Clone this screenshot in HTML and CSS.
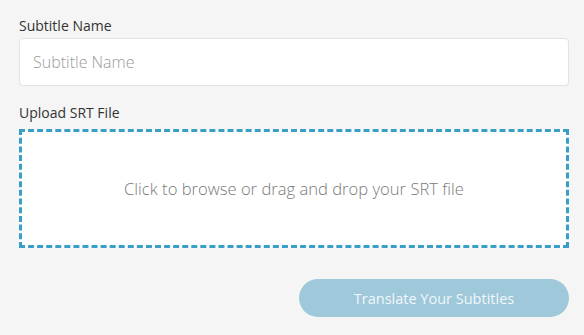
FILE: index.html
```html
<!DOCTYPE html>
<html lang="en">
<head>
<meta charset="utf-8">
<title>Translate Subtitles</title>
<link rel="stylesheet" href="styles.css">
</head>
<body>
<form class="page">
  <label class="field-label" for="subname">Subtitle Name</label>
  <input class="text-input" id="subname" type="text" placeholder="Subtitle Name">
  <label class="field-label upload-label">Upload SRT File</label>
  <div class="dropzone">Click to browse or drag and drop your SRT file</div>
  <div class="actions">
    <button class="submit" type="button" disabled>Translate Your Subtitles</button>
  </div>
</form>
</body>
</html>
```
FILE: styles.css
```css
html, body {
  margin: 0;
  padding: 0;
  background: #f5f5f5;
}
body {
  font-family: "Open Sans", Lato, sans-serif;
  color: #333;
}
.page {
  display: flex;
  flex-direction: column;
  width: 550px;
  padding: 16px 0 0 19px;
}
.field-label {
  display: block;
  font-size: 14px;
  line-height: 20px;
  font-weight: 500;
  color: #333;
  margin-bottom: 2px;
}
.upload-label {
  margin-top: 17px;
  margin-bottom: 6px;
}
.text-input {
  box-sizing: border-box;
  width: 550px;
  height: 48px;
  border: 1px solid #e2e2e2;
  border-radius: 4px;
  background: #fff;
  padding: 0 13px;
  font-family: "Open Sans", Lato, sans-serif;
  font-size: 16px;
  font-weight: 300;
  color: #333;
  outline: none;
}
.text-input::placeholder {
  color: #9a9a9a;
}
.dropzone {
  box-sizing: border-box;
  width: 550px;
  height: 119px;
  border: 3px dashed #3a9fc8;
  background: #fff;
  display: flex;
  align-items: center;
  justify-content: center;
  font-size: 16.6px;
  font-weight: 300;
  color: #7a7a7a;
}
.actions {
  display: flex;
  justify-content: flex-end;
  margin-top: 31px;
}
.submit {
  width: 270px;
  height: 38px;
  border: none;
  border-radius: 19px;
  background: #9fc8db;
  color: #f1f7fa;
  font-family: "Open Sans", Lato, sans-serif;
  font-size: 14.5px;
  font-weight: 400;
  padding: 0;
}
```
